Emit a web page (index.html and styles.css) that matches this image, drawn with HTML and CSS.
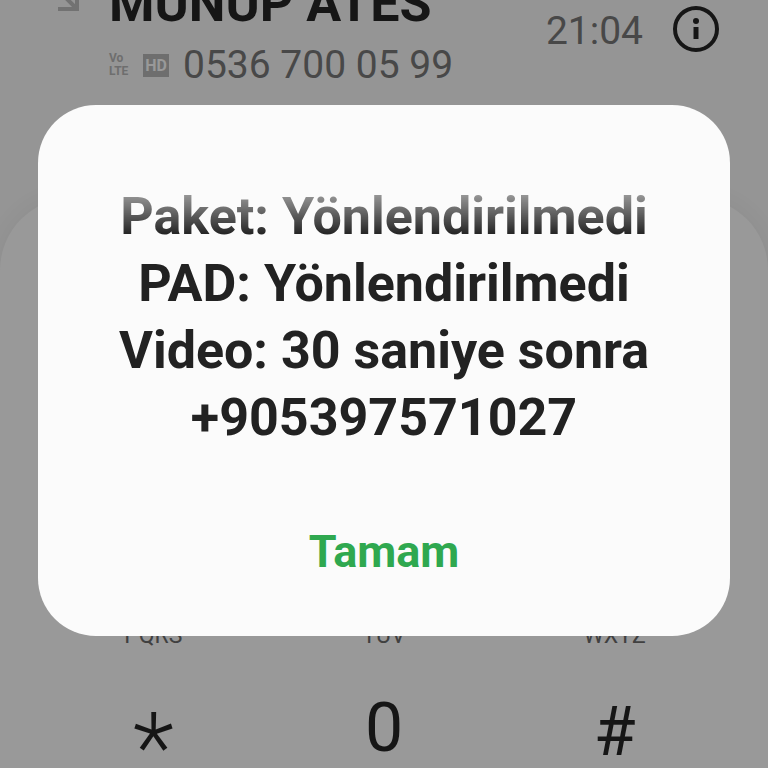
FILE: index.html
```
<!DOCTYPE html>
<html lang="tr">
<head>
  <meta charset="UTF-8" />
  <meta name="viewport" content="width=device-width, initial-scale=1" />
  <title>Telefon</title>
  <link rel="stylesheet" href="styles.css">
</head>
<body>
  <div class="phone">
    <header class="call">
      <svg class="call-arrow" width="24" height="24" viewBox="0 0 24 24" fill="none" stroke="currentColor" stroke-width="4" aria-hidden="true">
        <path d="M3 22H22V2M4 4L21 21" />
      </svg>
      <div class="call-who">
        <h1>MUNUP ATES</h1>
        <div class="call-number">
          <span class="volte">Vo<br>LTE</span>
          <span class="hd">HD</span>
          <span>0536 700 05 99</span>
        </div>
      </div>
      <time class="call-time">21:04</time>
      <button class="info" aria-label="Bilgi">
        <svg width="48" height="48" viewBox="0 0 48 48" aria-hidden="true">
          <circle cx="24" cy="24" r="21" fill="none" stroke="currentColor" stroke-width="4" />
          <circle cx="24" cy="16" r="3" fill="currentColor" />
          <path d="M24 22V34" stroke="currentColor" stroke-width="5" />
        </svg>
      </button>
    </header>

    <main class="keypad">
      <div class="letters">
        <span>PQRS</span>
        <span>TUV</span>
        <span>WXYZ</span>
      </div>
      <div class="keys">
        <button class="key star">*</button>
        <button class="key">0</button>
        <button class="key hash">#</button>
      </div>
    </main>
  </div>

  <div class="overlay">
    <section class="dialog" role="alertdialog" aria-labelledby="message">
      <p class="message" id="message">
        Paket: Yönlendirilmedi<br>
        PAD: Yönlendirilmedi<br>
        Video: 30 saniye sonra<br>
        +905397571027
      </p>
      <button class="ok">Tamam</button>
    </section>
  </div>
</body>
</html>
```
FILE: styles.css
```
* { box-sizing: border-box; }
body {
  margin: 0;
  font-family: Roboto, sans-serif;
  color: #161616;
  background: #959595;
  overflow: hidden;
}
h1, p { margin: 0; }
button {
  padding: 0;
  border: none;
  background: none;
  color: inherit;
  font-family: inherit;
  cursor: pointer;
}
.phone {
  display: flex;
  flex-direction: column;
  height: 100vh;
  overflow: hidden;
}

/* last call, scrolled partly out of view */
.call {
  display: flex;
  align-items: flex-end;
  height: 92px;
  padding: 0 48px 0 55px;
  flex-shrink: 0;
}
.call-arrow {
  margin-bottom: 81px;
  color: #727272;
}
.call-who {
  flex: 1;
  margin-left: 30px;
}
.call-who h1 {
  font-size: 52px;
  line-height: 68px;
  font-weight: 700;
  white-space: nowrap;
}
.call-number {
  display: flex;
  align-items: center;
  height: 54px;
  font-size: 39px;
  font-weight: 400;
  color: #484848;
  white-space: nowrap;
}
.volte {
  width: 20px;
  margin-right: 14px;
  font-size: 12px;
  line-height: 13px;
  font-weight: 700;
  color: #6e6e6e;
}
.hd {
  width: 26px;
  margin-right: 14px;
  font-size: 16px;
  line-height: 23px;
  font-weight: 700;
  text-align: center;
  color: #999;
  background: #6e6e6e;
}
.call-time {
  margin: 0 29px 38px 0;
  font-size: 39px;
  line-height: 46px;
  font-weight: 400;
  color: #484848;
}
.info {
  display: flex;
  margin-bottom: 39px;
}

/* keypad sheet */
.keypad {
  display: flex;
  flex-direction: column;
  justify-content: flex-end;
  flex: 1;
  margin-top: 106px;
  padding: 0 38px;
  border-radius: 72px 72px 0 0;
  background: #999;
  box-shadow: 0 0 24px rgba(0, 0, 0, 0.06);
}
.letters, .keys {
  display: grid;
  grid-template-columns: repeat(3, 1fr);
  text-align: center;
}
.letters {
  font-size: 23px;
  line-height: 28px;
  color: #404040;
}
.keys {
  height: 118px;
  align-items: end;
}
.key {
  height: 80px;
  font-size: 68px;
  line-height: 80px;
  font-weight: 400;
}
.hash {
  padding-top: 4px;
}
.star {
  font-size: 96px;
  line-height: 120px;
  font-weight: 300;
}

.overlay {
  position: fixed;
  inset: 0;
  display: flex;
  align-items: flex-start;
  padding: 105px 38px 0;
}
.dialog {
  flex: 1;
  padding: 55px 40px 36px;
  border-radius: 58px;
  background: #fbfbfb;
  text-align: center;
}
.message {
  padding-top: 23px;
  font-size: 52px;
  line-height: 67px;
  font-weight: 700;
  color: #222;
  -webkit-mask-image: linear-gradient(transparent, #000 75px);
  mask-image: linear-gradient(transparent, #000 75px);
}
.ok {
  width: 100%;
  height: 98px;
  margin-top: 51px;
  font-size: 45px;
  font-weight: 700;
  color: #2fa84f;
}
```
